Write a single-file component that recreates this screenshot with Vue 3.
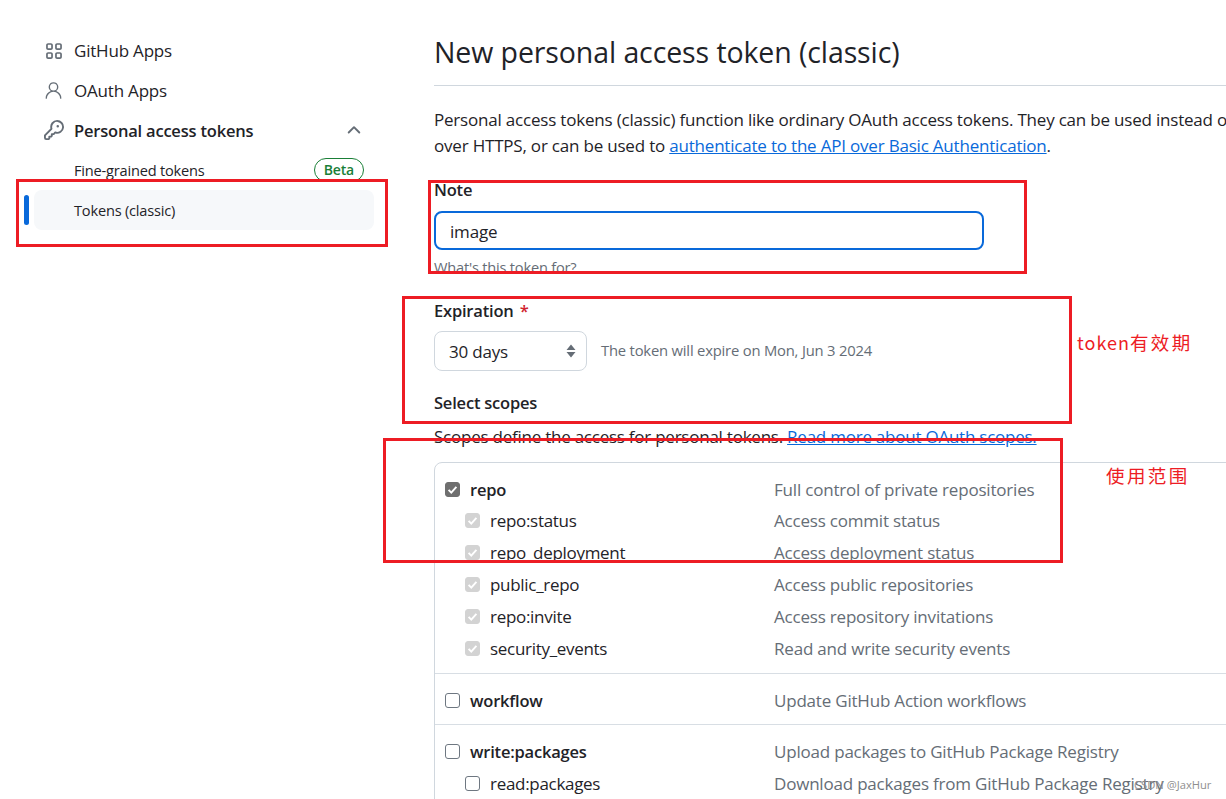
<script setup>
const subNav = [
  { label: 'Fine-grained tokens', beta: true },
  { label: 'Tokens (classic)', active: true },
]
const scopeGroups = [
  {
    name: 'repo', desc: 'Full control of private repositories', checked: true,
    children: [
      { name: 'repo:status', desc: 'Access commit status' },
      { name: 'repo_deployment', desc: 'Access deployment status' },
      { name: 'public_repo', desc: 'Access public repositories' },
      { name: 'repo:invite', desc: 'Access repository invitations' },
      { name: 'security_events', desc: 'Read and write security events' },
    ],
  },
  { name: 'workflow', desc: 'Update GitHub Action workflows', children: [] },
  {
    name: 'write:packages', desc: 'Upload packages to GitHub Package Registry',
    children: [{ name: 'read:packages', desc: 'Download packages from GitHub Package Registry', plain: true }],
  },
]
</script>

<template>
  <div class="page">
    <aside class="side">
      <a class="nav"><svg class="ico" viewBox="0 0 16 16"><path d="M1 2.75C1 1.784 1.784 1 2.75 1h2.5C6.216 1 7 1.784 7 2.75v2.5C7 6.216 6.216 7 5.25 7h-2.5C1.784 7 1 6.216 1 5.25Zm1.75-.25a.25.25 0 0 0-.25.25v2.5c0 .138.112.25.25.25h2.5a.25.25 0 0 0 .25-.25v-2.5a.25.25 0 0 0-.25-.25ZM9 2.75C9 1.784 9.784 1 10.75 1h2.5C14.216 1 15 1.784 15 2.75v2.5C15 6.216 14.216 7 13.25 7h-2.5C9.784 7 9 6.216 9 5.25Zm1.75-.25a.25.25 0 0 0-.25.25v2.5c0 .138.112.25.25.25h2.5a.25.25 0 0 0 .25-.25v-2.5a.25.25 0 0 0-.25-.25ZM1 10.75C1 9.784 1.784 9 2.75 9h2.5C6.216 9 7 9.784 7 10.75v2.5C7 14.216 6.216 15 5.25 15h-2.5C1.784 15 1 14.216 1 13.25Zm1.75-.25a.25.25 0 0 0-.25.25v2.5c0 .138.112.25.25.25h2.5a.25.25 0 0 0 .25-.25v-2.5a.25.25 0 0 0-.25-.25ZM9 10.75C9 9.784 9.784 9 10.75 9h2.5c.966 0 1.75.784 1.75 1.75v2.5c0 .966-.784 1.75-1.75 1.75h-2.5C9.784 15 9 14.216 9 13.25Zm1.75-.25a.25.25 0 0 0-.25.25v2.5c0 .138.112.25.25.25h2.5a.25.25 0 0 0 .25-.25v-2.5a.25.25 0 0 0-.25-.25Z"/></svg>GitHub Apps</a>
      <a class="nav"><svg class="ico person" viewBox="0 0 24 24"><path d="M12 2.5a5.5 5.5 0 0 1 3.096 10.047 9.005 9.005 0 0 1 5.9 8.181.75.75 0 1 1-1.499.044 7.5 7.5 0 0 0-14.993 0 .75.75 0 0 1-1.5-.045 9.005 9.005 0 0 1 5.9-8.18A5.5 5.5 0 0 1 12 2.5ZM8 8a4 4 0 1 0 8 0 4 4 0 0 0-8 0Z"/></svg>OAuth Apps</a>
      <a class="nav strong"><svg class="ico key" viewBox="0 0 16 16"><path d="M10.5 0a5.499 5.499 0 1 1-1.288 10.848l-.932.932a.749.749 0 0 1-.53.22H7v.75a.749.749 0 0 1-.22.53l-.5.5a.749.749 0 0 1-.53.22H5v.75a.749.749 0 0 1-.22.53l-.5.5a.749.749 0 0 1-.53.22h-2A1.75 1.75 0 0 1 0 14.25v-2c0-.199.079-.389.22-.53l4.932-4.932A5.5 5.5 0 0 1 10.5 0Zm-4 5.5c-.001.431.069.86.205 1.269a.75.75 0 0 1-.181.768L1.5 12.56v1.69c0 .138.112.25.25.25h1.69l.06-.06v-1.19a.75.75 0 0 1 .75-.75h1.19l.06-.06v-1.19a.75.75 0 0 1 .75-.75h1.19l1.023-1.025a.75.75 0 0 1 .768-.18A4 4 0 1 0 6.5 5.5ZM11 6a1 1 0 1 1 0-2 1 1 0 0 1 0 2Z"/></svg>Personal access tokens<svg class="chev" viewBox="0 0 16 16"><path d="M3.22 10.53a.749.749 0 0 1 0-1.06l4.25-4.25a.749.749 0 0 1 1.06 0l4.25 4.25a.749.749 0 1 1-1.06 1.06L8 6.811 4.28 10.53a.749.749 0 0 1-1.06 0Z"/></svg></a>
      <a v-for="s in subNav" :key="s.label" class="sub" :class="{ active: s.active }">
        <span>{{ s.label }}</span>
        <span v-if="s.beta" class="beta">Beta</span>
      </a>
    </aside>

    <main class="main">
      <h1 class="title">New personal access token (classic)</h1>
      <p class="intro">Personal access tokens (classic) function like ordinary OAuth access tokens. They can be used instead of a password for Git<br>over HTTPS, or can be used to <a class="link">authenticate to the API over Basic Authentication</a>.</p>

      <div class="label note-label">Note</div>
      <div class="input">image</div>
      <div class="hint">What's this token for?</div>

      <div class="label exp-label">Expiration <span class="req">*</span></div>
      <div class="exp-row">
        <div class="select">30 days
          <svg class="updown" viewBox="0 0 10 16"><path d="M5 1.5 9.5 7h-9ZM5 14.5 .5 9h9Z"/></svg>
        </div>
        <span class="exp-note">The token will expire on Mon, Jun 3 2024</span>
      </div>

      <div class="label scopes-label">Select scopes</div>
      <p class="scopes-text">Scopes define the access for personal tokens. <a class="link">Read more about OAuth scopes.</a></p>

      <div class="scope-box">
        <section v-for="g in scopeGroups" :key="g.name" class="group">
          <div class="row">
            <span class="name bold">
              <i class="cb" :class="{ dark: g.checked }"><svg v-if="g.checked" viewBox="0 0 16 16"><path d="M3.2 8.5 6.5 11.8 12.8 4.8" /></svg></i>{{ g.name }}
            </span>
            <span class="desc">{{ g.desc }}</span>
          </div>
          <div v-for="c in g.children" :key="c.name" class="row child">
            <span class="name">
              <i class="cb" :class="c.plain ? '' : 'soft'"><svg v-if="!c.plain" viewBox="0 0 16 16"><path d="M3.2 8.5 6.5 11.8 12.8 4.8" /></svg></i>{{ c.name }}
            </span>
            <span class="desc">{{ c.desc }}</span>
          </div>
        </section>
      </div>
    </main>

    <span class="mark box-a"></span>
    <span class="mark box-b"></span>
    <span class="mark box-c"></span>
    <span class="mark box-d"></span>
    <span class="note-red n1">token<b class="cjk">有效期</b></span>
    <span class="note-red n2"><b class="cjk">使用范围</b></span>
    <span class="wm">CSDN @JaxHur</span>
  </div>
</template>

<style>
html, body { margin: 0; background: #fff; }
</style>

<style scoped>
.page {
  position: relative; width: 1226px; height: 799px; overflow: hidden; display: flex;
  background: #fff; color: #1f2328;
  font-family: "Open Sans", "Noto Sans", sans-serif; font-size: 17px;
  letter-spacing: -0.2px;
}
.side { width: 350px; margin-left: 24px; padding-top: 31px; flex: none; box-sizing: border-box; }
.nav { position: relative; display: flex; align-items: center; height: 40px; box-sizing: border-box; padding: 0 0 2px 50px; }
.ico { position: absolute; left: 21px; top: 11px; width: 18px; height: 18px; fill: #656d76; }
.person { left: 19px; top: 9px; width: 21px; height: 21px; }
.key { left: 20px; width: 20px; height: 20px; top: 9px; }
.strong { font-weight: 600; font-size: 16.5px; }
.chev { position: absolute; left: 320px; top: 9px; width: 20px; height: 20px; fill: #656d76; }
.sub { display: flex; align-items: center; justify-content: space-between; height: 40px; margin-left: 10px; margin-top: -1px; margin-bottom: 1px; padding: 0 10px 0 40px; font-size: 14.6px; border-radius: 8px; position: relative; }
.active { background: #f6f8fa; }
.active::before { content: ""; position: absolute; left: -10px; top: 5px; width: 5px; height: 30px; border-radius: 3px; background: #0969da; }
.beta { display: inline-block; border: 1px solid #1a7f37; color: #1a7f37; border-radius: 12px; font-size: 14px; font-weight: 600; line-height: 22px; padding: 0 9px; }

.main { width: 1000px; margin-left: 60px; flex: none; }
.title { margin: 0; height: 55px; padding-top: 31px; line-height: 45px; margin-top: -1px; box-sizing: content-box; font-size: 28.5px; font-weight: 400; border-bottom: 1px solid #d0d7de; width: 800px; letter-spacing: -0.1px; }
.intro { margin: 0; margin-top: 21px; line-height: 26px; white-space: nowrap; }
.link { color: #0969da; text-decoration: underline; }
.label { font-weight: 600; line-height: 24px; font-size: 16.5px; }
.note-label { margin-top: 19px; }
.input { width: 550px; height: 39px; box-sizing: border-box; margin-top: 9px; border: 2px solid #0969da; border-radius: 8px; padding-left: 14px; line-height: 37px; font-size: 17px; }
.hint { font-size: 14.6px; color: #656d76; margin-top: 8px; line-height: 19px; }
.exp-label { margin-top: 22px; }
.req { color: #d1242f; margin-left: 2px; }
.exp-row { display: flex; align-items: center; gap: 14px; margin-top: 8px; }
.select { position: relative; width: 153px; height: 40px; box-sizing: border-box; border: 1px solid #d0d7de; border-radius: 8px; padding-left: 14px; line-height: 40px; font-size: 17px; }
.updown { position: absolute; right: 10px; top: 11px; width: 10px; height: 16px; fill: #656d76; }
.exp-note { font-size: 14.8px; color: #656d76; margin-top: -3px; }
.scopes-label { margin-top: 20px; }
.scopes-text { margin: 0; margin-top: 9px; line-height: 26px; white-space: nowrap; letter-spacing: -0.24px; }
.scope-box { width: 1000px; margin-top: 12px; border: 1px solid #d0d7de; border-radius: 8px; }
.group { padding: 11px 0 7px; border-bottom: 1px solid #d8dee4; }
.group:first-child { padding-bottom: 8px; }
.group:first-child .row:first-child { margin-bottom: -1px; }
.row { display: flex; height: 32px; align-items: center; box-sizing: border-box; padding-bottom: 2px; }
.name { display: flex; align-items: center; width: 339px; padding-left: 10px; box-sizing: border-box; flex: none; }
.child .name { padding-left: 30px; letter-spacing: -0.3px; }
.bold { font-weight: 600; font-size: 16.5px; }
.desc { color: #656d76; }
.cb { display: inline-flex; width: 15px; height: 15px; box-sizing: border-box; border: 1px solid #6e7781; border-radius: 3px; margin-right: 10px; flex: none; }
.cb svg { width: 13px; height: 13px; fill: none; stroke: #fff; stroke-width: 2.4; }
.dark { background: #6f6f6f; border-color: #6f6f6f; }
.soft { background: #d3d3d3; border-color: #d3d3d3; }

.mark { position: absolute; border: 3px solid #ed1c24; box-sizing: border-box; pointer-events: none; }
.box-a { left: 16px; top: 179px; width: 372px; height: 68px; }
.box-b { left: 428px; top: 180px; width: 599px; height: 94px; }
.box-c { left: 402px; top: 296px; width: 670px; height: 128px; }
.box-d { left: 383px; top: 438px; width: 680px; height: 125px; }
.note-red { position: absolute; color: #ed1c24; font-family: "Noto Sans CJK SC", "Noto Sans", sans-serif; font-size: 18px; letter-spacing: 1px; line-height: 24px; }
.cjk { font-weight: 400; font-size: 18.5px; letter-spacing: 2.4px; }
.n1 { left: 1077px; top: 330px; }
.n2 { left: 1106px; top: 463px; }
.wm { position: absolute; left: 1134px; top: 777px; font-size: 11.2px; color: #8f8f8f; letter-spacing: 0; }
</style>
